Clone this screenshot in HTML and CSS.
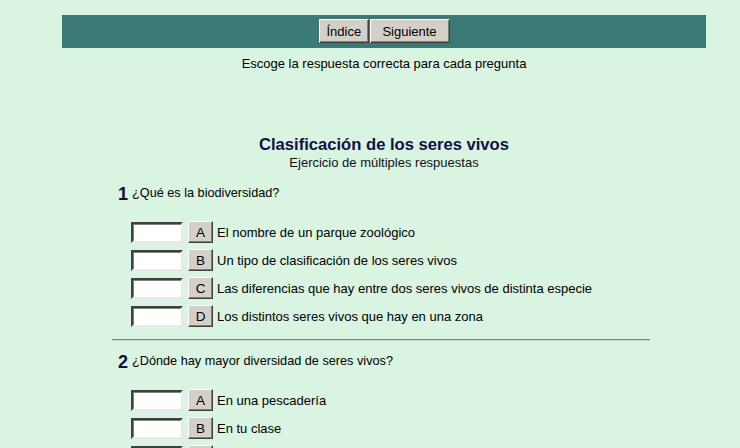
FILE: index.html
```html
<!DOCTYPE html>
<html lang="es">
<head>
<meta charset="utf-8">
<title>Clasificación de los seres vivos</title>
<link rel="stylesheet" href="styles.css">
</head>
<body>
<div class="page">
  <div class="topbar">
    <button class="navbtn">Índice</button><button class="navbtn">Siguiente</button>
  </div>
  <p class="instructions">Escoge la respuesta correcta para cada pregunta</p>

  <h1 class="title">Clasificación de los seres vivos</h1>
  <p class="subtitle">Ejercicio de múltiples respuestas</p>

  <div class="quiz">
    <div class="question">
      <div class="qhead"><span class="qnum">1</span><span class="qtext">¿Qué es la biodiversidad?</span></div>
      <div class="answers">
        <div class="answer"><span class="box"></span><button class="letter">A</button><span class="atext">El nombre de un parque zoológico</span></div>
        <div class="answer"><span class="box"></span><button class="letter">B</button><span class="atext">Un tipo de clasificación de los seres vivos</span></div>
        <div class="answer"><span class="box"></span><button class="letter">C</button><span class="atext">Las diferencias que hay entre dos seres vivos de distinta especie</span></div>
        <div class="answer"><span class="box"></span><button class="letter">D</button><span class="atext">Los distintos seres vivos que hay en una zona</span></div>
      </div>
    </div>
    <hr class="sep">
    <div class="question">
      <div class="qhead"><span class="qnum">2</span><span class="qtext">¿Dónde hay mayor diversidad de seres vivos?</span></div>
      <div class="answers">
        <div class="answer"><span class="box"></span><button class="letter">A</button><span class="atext">En una pescadería</span></div>
        <div class="answer"><span class="box"></span><button class="letter">B</button><span class="atext">En tu clase</span></div>
        <div class="answer"><span class="box"></span><button class="letter">C</button><span class="atext">En un bosque</span></div>
      </div>
    </div>
  </div>
</div>
</body>
</html>
```
FILE: styles.css
```css
html, body {
  margin: 0;
  padding: 0;
}
body {
  background: #d9f4e1;
  font-family: "Liberation Sans", Arial, sans-serif;
  color: #000;
  font-size: 13px;
}
.page {
  width: 644px;
  margin-left: 62px;
  padding-top: 15px;
}
.topbar {
  height: 33px;
  background: #3b7b77;
  display: flex;
  justify-content: center;
  align-items: flex-start;
  padding-top: 4px;
  box-sizing: border-box;
  gap: 1px;
}
.navbtn {
  height: 24px;
  margin: 0;
  padding: 0 7px;
  font-family: "Liberation Sans", Arial, sans-serif;
  font-size: 13px;
  color: #000;
  background: #d4d0c8;
  border: 1px solid;
  border-color: #ffffff #404040 #404040 #ffffff;
  box-shadow: inset -1px -1px 0 #808080;
}
.navbtn:first-child { width: 50px; }
.navbtn:last-child { width: 80px; }
.instructions {
  margin: 8px 0 0;
  text-align: center;
  line-height: 16px;
}
.title {
  margin: 63px 0 0;
  text-align: center;
  font-size: 16.6px;
  font-weight: bold;
  color: #10104a;
  line-height: 20px;
}
.subtitle {
  margin: 0;
  text-align: center;
  line-height: 16px;
  color: #111;
}
.quiz {
  width: 538px;
  margin-left: 50px;
  margin-top: 13px;
}
.qhead {
  display: flex;
  align-items: baseline;
  padding-left: 6px;
  height: 24px;
}
.qnum {
  font-size: 18px;
  font-weight: bold;
  color: #0f0f3a;
  margin-right: 4px;
}
.qtext {
  font-size: 12.7px;
  position: relative;
  top: -3px;
}
.answers {
  margin-top: 13px;
  padding-left: 19px;
  display: flex;
  flex-direction: column;
  gap: 6px;
}
.answer {
  display: flex;
  align-items: center;
  height: 22px;
}
.box {
  width: 52px;
  height: 21px;
  box-sizing: border-box;
  background: #fff;
  border: 2px solid;
  border-color: #404040 #e8e8e8 #e8e8e8 #404040;
  box-shadow: inset 1px 1px 0 #808080;
  margin-right: 5px;
}
.letter {
  width: 25px;
  height: 22px;
  margin: 0 4px 0 0;
  padding: 0;
  background: #d4d0c8;
  border: 1px solid;
  border-color: #ffffff #404040 #404040 #ffffff;
  box-shadow: inset -1px -1px 0 #808080;
  font-family: "Liberation Sans", Arial, sans-serif;
  font-size: 13.5px;
  color: #000;
}
.atext {
  font-size: 13px;
}
.sep {
  margin: 12px 0 11px 0;
  border: 0;
  border-top: 1px solid #808080;
  border-bottom: 1px solid #c8dcce;
  height: 0;
}
```
